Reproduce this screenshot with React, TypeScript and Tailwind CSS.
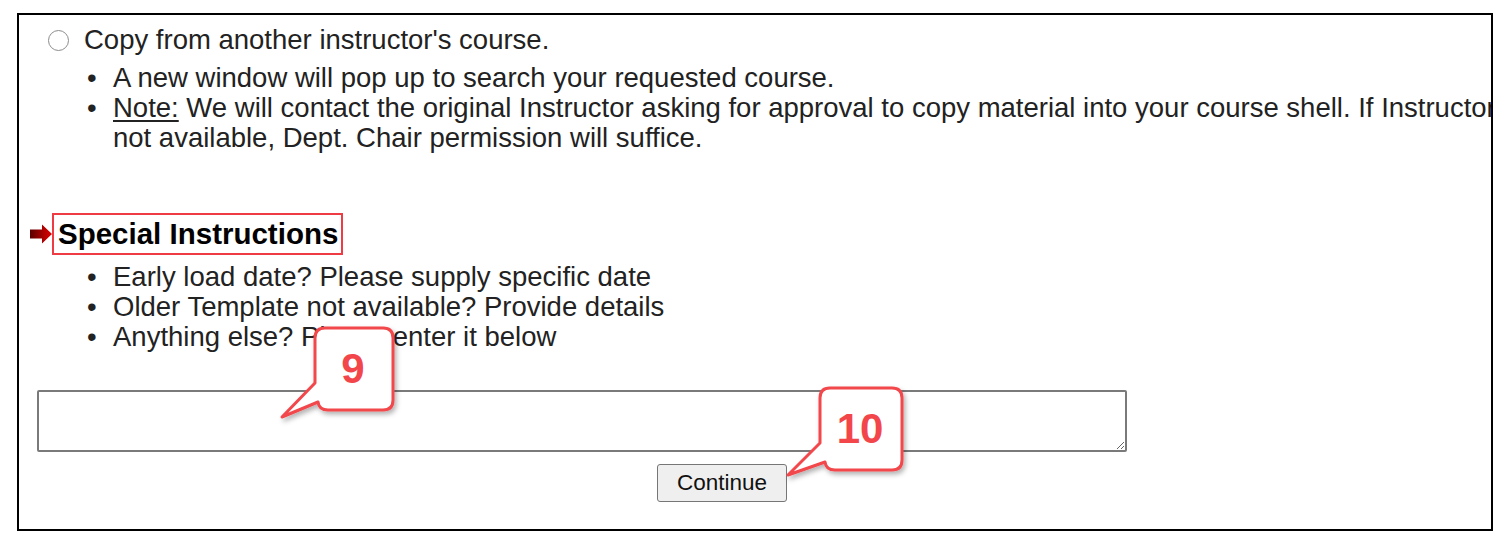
import React from "react";

function Bullet({ children }: { children: React.ReactNode }) {
  return (
    <li className="flex h-[30px] items-center whitespace-nowrap">
      <span className="w-[26px] shrink-0">•</span>
      <span>{children}</span>
    </li>
  );
}

function Callouts() {
  return (
    <svg
      className="pointer-events-none absolute left-0 top-0"
      width={1512}
      height={538}
      viewBox="0 0 1512 538"
    >
      <defs>
        <filter id="sh" x="-20%" y="-20%" width="140%" height="140%">
          <feDropShadow dx="2" dy="3" stdDeviation="2.5" floodColor="#000" floodOpacity="0.3" />
        </filter>
      </defs>
      {/* 9 */}
      <path
        d="M325 328 H383 Q393 328 393 338 V400 Q393 410 383 410 H328 Q319 410 318 402 L282 417 L315 383 V338 Q315 328 325 328 Z"
        fill="#fff"
        stroke="#f2464b"
        strokeWidth={3}
        strokeLinejoin="round"
        filter="url(#sh)"
      />
      <text
        x={353}
        y={383}
        textAnchor="middle"
        fontFamily="'Liberation Sans', Arial, sans-serif"
        fontWeight={700}
        fontSize={42}
        fill="#f2464b"
      >
        9
      </text>
      {/* 10 */}
      <path
        d="M830 388 H892 Q902 388 902 398 V460 Q902 470 892 470 H835 Q826 470 825 462 L788 475 L820 443 V398 Q820 388 830 388 Z"
        fill="#fff"
        stroke="#f2464b"
        strokeWidth={3}
        strokeLinejoin="round"
        filter="url(#sh)"
      />
      <text
        x={860}
        y={443}
        textAnchor="middle"
        fontFamily="'Liberation Sans', Arial, sans-serif"
        fontWeight={700}
        fontSize={42}
        fill="#f2464b"
      >
        10
      </text>
    </svg>
  );
}

export default function App() {
  return (
    <div className="relative h-[538px] w-[1512px] overflow-hidden bg-white pl-[17px] pt-[13px] font-['Liberation_Sans',Arial,sans-serif] text-[27.5px] leading-[30px] text-[#222]">
      <div className="h-[518px] w-[1476px] overflow-hidden border-2 border-black">
        {/* Copy option */}
        <div className="ml-[29px] mt-[10px] flex h-[30px] items-center gap-[15px] whitespace-nowrap">
          <span className="h-[21px] w-[21px] shrink-0 rounded-full border-[1.5px] border-[#8c8c8c] bg-white" />
          <span>Copy from another instructor's course.</span>
        </div>
        <ul className="ml-[68px] mt-[8px]">
          <Bullet>A new window will pop up to search your requested course.</Bullet>
          <Bullet>
            <span className="underline underline-offset-[3px]">Note:</span> We will contact the original
            Instructor asking for approval to copy material into your course shell. If Instructor is
          </Bullet>
          <li className="flex h-[30px] items-center whitespace-nowrap">
            <span className="w-[26px] shrink-0" />
            <span>not available, Dept. Chair permission will suffice.</span>
          </li>
        </ul>

        {/* Special Instructions */}
        <div className="ml-[11px] mt-[60px] flex items-center">
          <svg width={22} height={20} viewBox="0 0 22 20">
            <defs>
              <linearGradient id="ar" x1="0" y1="0" x2="1" y2="0">
                <stop offset="0" stopColor="#5a0000" />
                <stop offset="1" stopColor="#e10000" />
              </linearGradient>
            </defs>
            <path d="M0 5.5 H12 V0.5 L22 10 L12 19.5 V14.5 H0 Z" fill="url(#ar)" />
          </svg>
          <div className="flex h-[42px] items-center whitespace-nowrap border-2 border-[#ee3b44] pl-[4px] pr-[3px] text-[29.5px] font-bold text-black">
            Special Instructions
          </div>
        </div>
        <ul className="ml-[68px] mt-[7px]">
          <Bullet>Early load date? Please supply specific date</Bullet>
          <Bullet>Older Template not available? Provide details</Bullet>
          <Bullet>Anything else? Please enter it below</Bullet>
        </ul>

        {/* Input */}
        <textarea className="ml-[18px] mt-[38px] block h-[62px] w-[1090px] rounded-[2px] border-2 border-[#7a7a7a] bg-white outline-none" />
        <button className="ml-[638px] mt-[12px] flex h-[38px] w-[130px] items-center justify-center rounded-[3px] border-[1.5px] border-[#767676] bg-[#efefef] text-[22.5px] text-[#111]">
          Continue
        </button>
      </div>
      <Callouts />
    </div>
  );
}
